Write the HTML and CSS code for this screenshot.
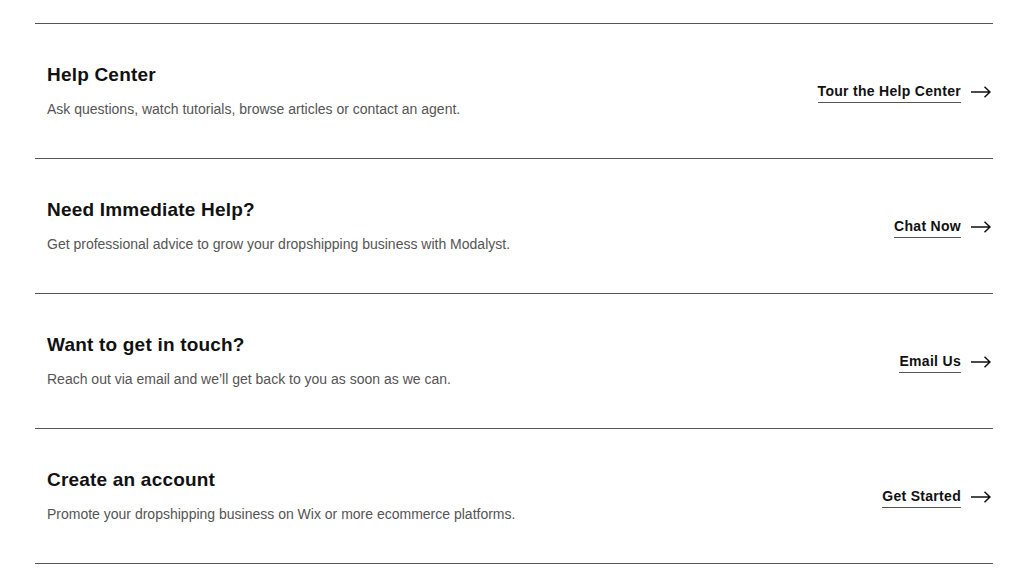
FILE: index.html
```html
<!DOCTYPE html>
<html lang="en">
<head>
  <meta charset="UTF-8" />
  <meta name="viewport" content="width=device-width, initial-scale=1.0"/>
  <title>Support</title>
  <link rel="stylesheet" href="styles.css">
</head>
<body>

  <section class="support-list">
    <div class="support-row">
      <div class="info">
        <h3>Help Center</h3>
        <p>Ask questions, watch tutorials, browse articles or contact an agent.</p>
      </div>
      <a class="cta" href="#"><span>Tour the Help Center</span>
        <svg class="arrow" width="20" height="12" viewBox="0 0 20 12"><path d="M0 6H19M13.5 0.7L19 6L13.5 11.3" fill="none" stroke="#111" stroke-width="1.5"/></svg>
      </a>
    </div>

    <div class="support-row">
      <div class="info">
        <h3>Need Immediate Help?</h3>
        <p>Get professional advice to grow your dropshipping business with Modalyst.</p>
      </div>
      <a class="cta" href="#"><span>Chat Now</span>
        <svg class="arrow" width="20" height="12" viewBox="0 0 20 12"><path d="M0 6H19M13.5 0.7L19 6L13.5 11.3" fill="none" stroke="#111" stroke-width="1.5"/></svg>
      </a>
    </div>

    <div class="support-row">
      <div class="info">
        <h3>Want to get in touch?</h3>
        <p>Reach out via email and we’ll get back to you as soon as we can.</p>
      </div>
      <a class="cta" href="#"><span>Email Us</span>
        <svg class="arrow" width="20" height="12" viewBox="0 0 20 12"><path d="M0 6H19M13.5 0.7L19 6L13.5 11.3" fill="none" stroke="#111" stroke-width="1.5"/></svg>
      </a>
    </div>

    <div class="support-row">
      <div class="info">
        <h3>Create an account</h3>
        <p>Promote your dropshipping business on Wix or more ecommerce platforms.</p>
      </div>
      <a class="cta" href="#"><span>Get Started</span>
        <svg class="arrow" width="20" height="12" viewBox="0 0 20 12"><path d="M0 6H19M13.5 0.7L19 6L13.5 11.3" fill="none" stroke="#111" stroke-width="1.5"/></svg>
      </a>
    </div>
  </section>

</body>
</html>
```

FILE: styles.css
```css
body {
  margin: 0;
  font-family: "Liberation Sans", Arial, Helvetica, sans-serif;
  background: #fff;
  color: #111;
}

.support-list {
  width: 958px;
  margin: 23px 0 0 35px;
  border-bottom: 1px solid #555;
}

.support-row {
  display: flex;
  justify-content: space-between;
  align-items: center;
  border-top: 1px solid #555;
  padding: 39px 2px 39px 12px;
}

.info h3 {
  margin: 0;
  font-size: 19px;
  line-height: 23px;
  font-weight: bold;
  letter-spacing: 0.2px;
  color: #111;
}

.info p {
  margin: 13px 0 0;
  font-size: 14px;
  line-height: 20px;
  color: #555;
}

.cta {
  display: flex;
  align-items: center;
  gap: 10px;
  color: #111;
  text-decoration: none;
  font-size: 14px;
  font-weight: bold;
  letter-spacing: 0.3px;
  margin-top: 3px;
}

.cta span {
  line-height: 18px;
  border-bottom: 1px solid #555;
  padding-bottom: 2px;
}

.arrow {
  display: block;
  margin-bottom: 1px;
}
```
